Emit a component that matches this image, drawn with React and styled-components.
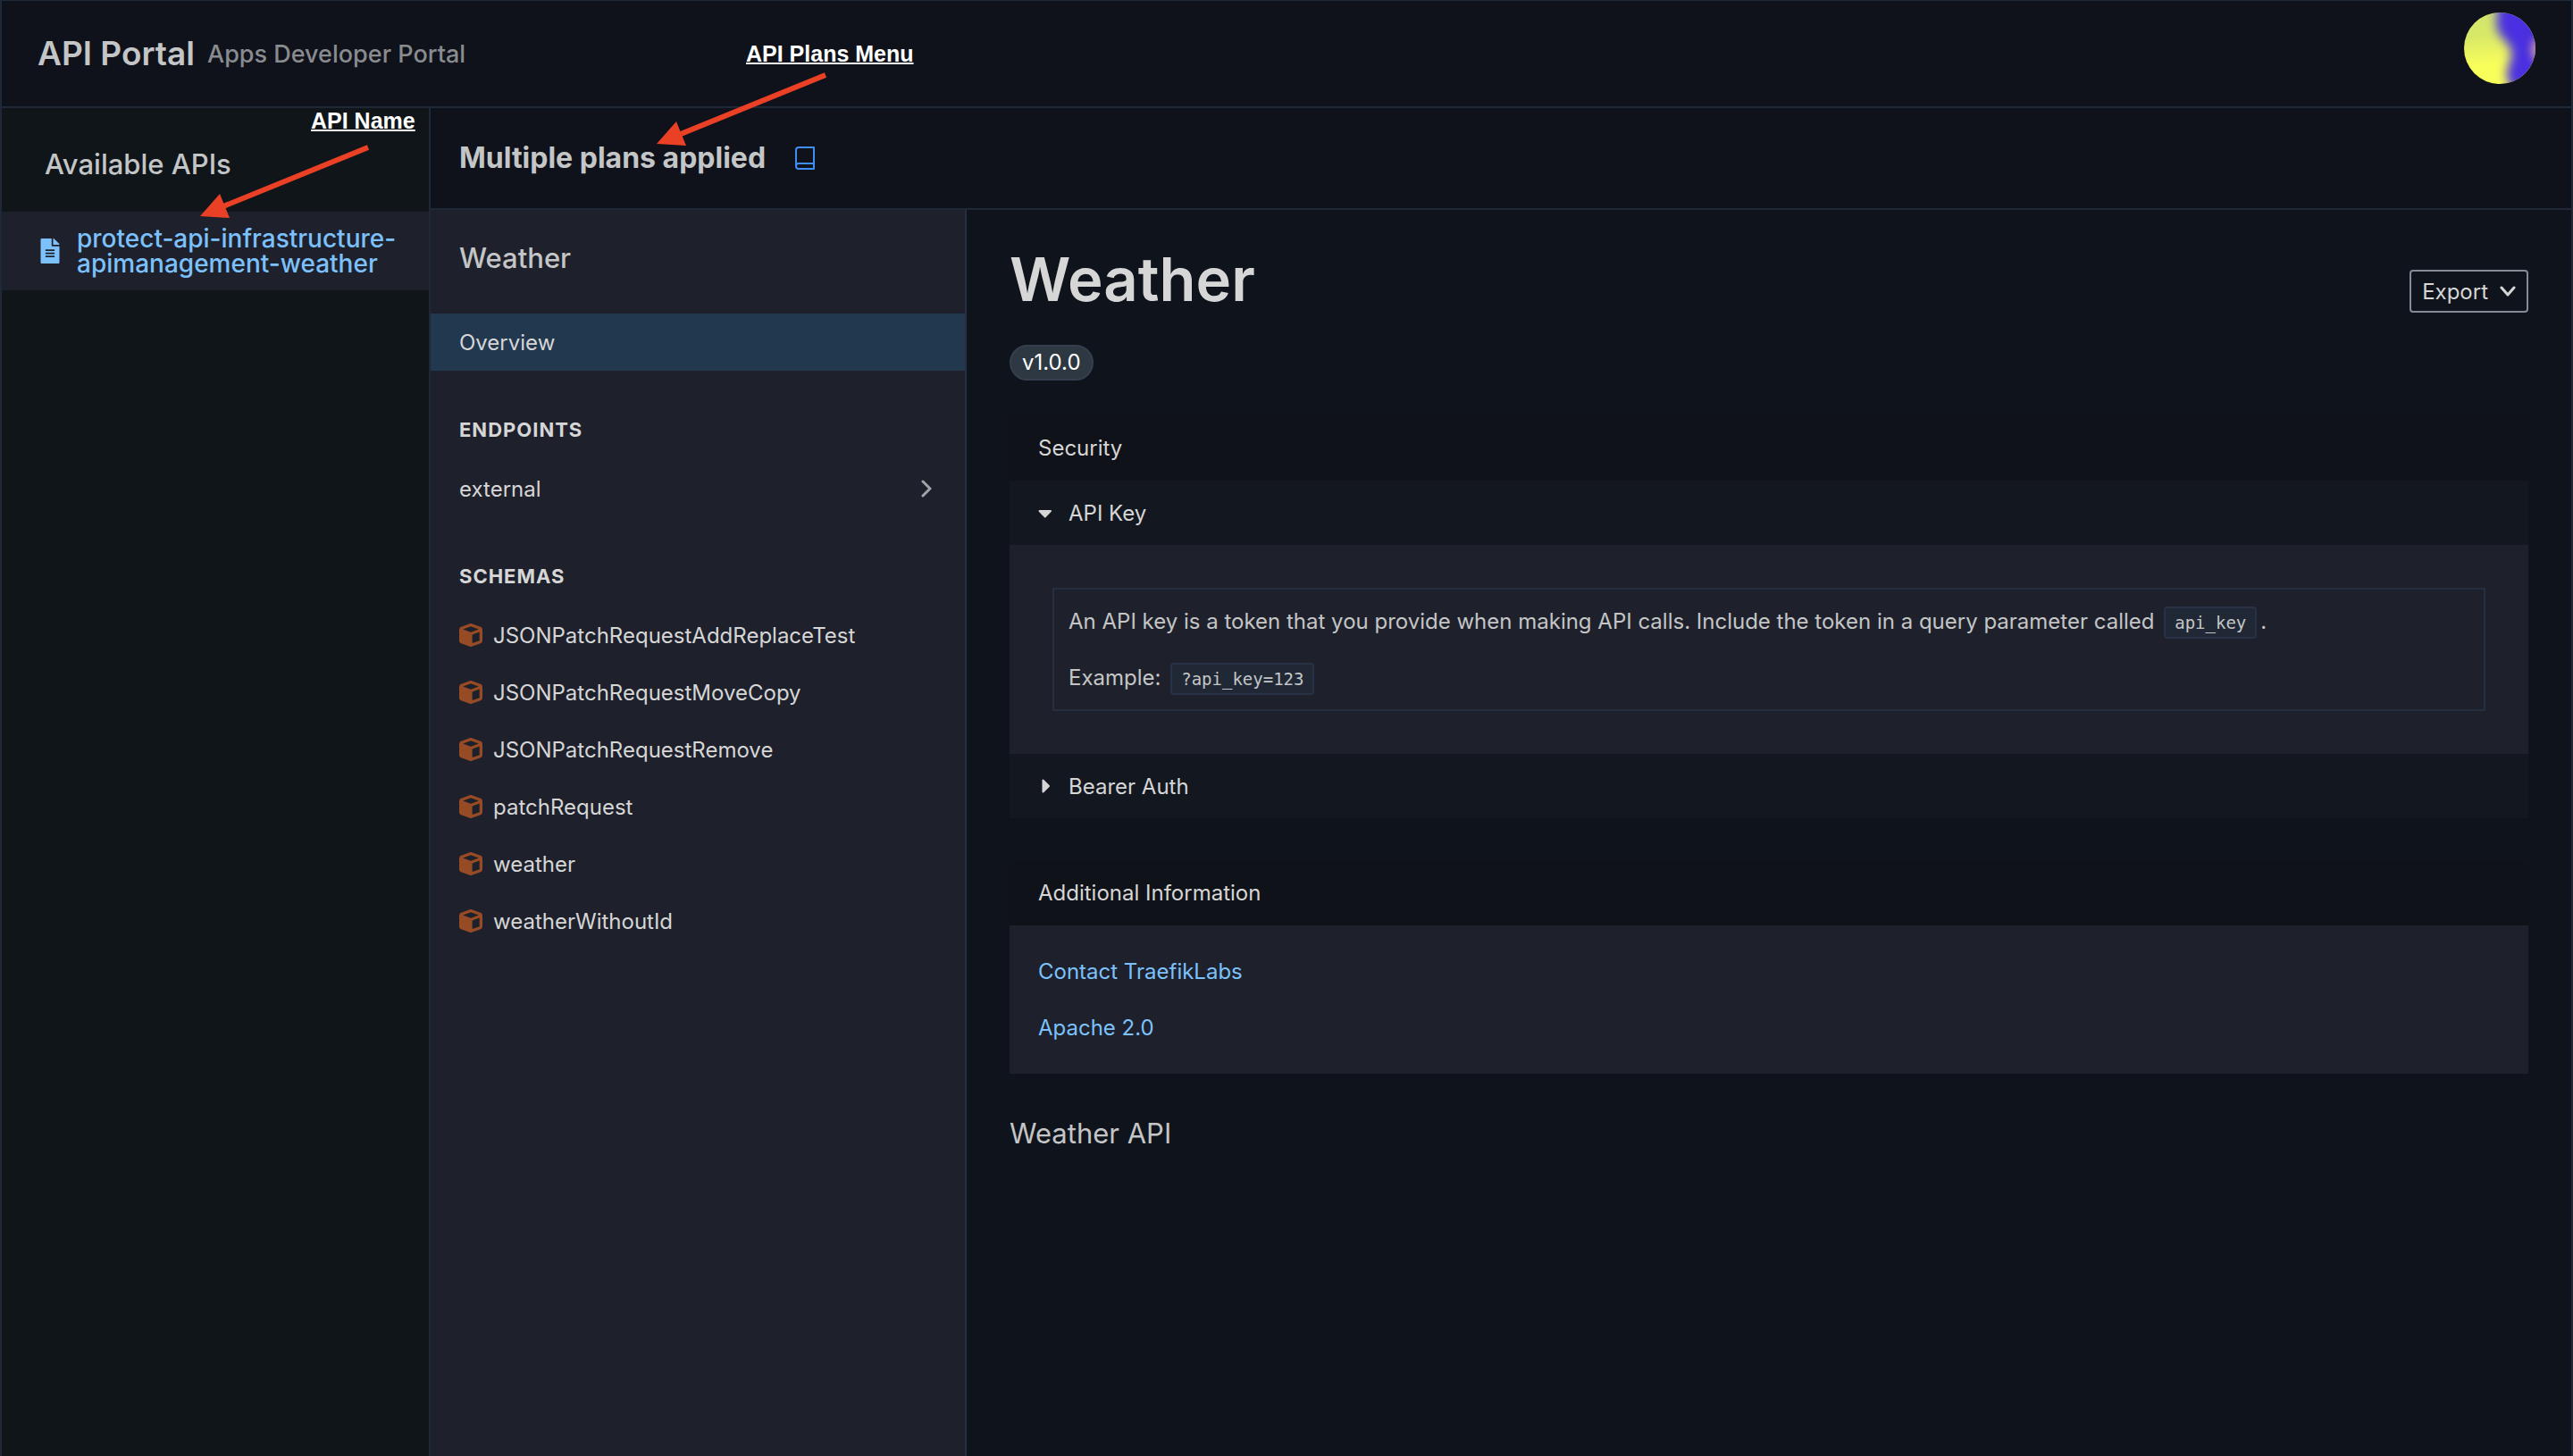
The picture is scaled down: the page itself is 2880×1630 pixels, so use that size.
import React, { useState } from 'react';
import styled, { createGlobalStyle } from 'styled-components';

const color = {
  page: '#0f131b',
  bar: '#0f121a',
  rail: '#0f1518',
  panel: '#1e212b',
  line: '#1f2836',
  boxLine: '#262f3f',
  active: '#22384f',
  row: '#131820',
  rowHead: '#0f1218',
  text: '#d6d6d7',
  soft: '#c4c5c6',
  muted: '#898b8f',
  link: '#7cc1fb',
  mark: '#ea4025',
};

const GlobalStyle = createGlobalStyle`
  *, *::before, *::after { box-sizing: border-box; }
  body {
    margin: 0;
    background: ${color.page};
    color: ${color.text};
    font-family: Inter, "Liberation Sans", sans-serif;
    font-size: 24px;
    line-height: 39px;
  }
  h1, h2, h3, p, ul { margin: 0; padding: 0; font-weight: 400; }
  ul { list-style: none; }
  a { color: inherit; text-decoration: none; }
  button { font: inherit; color: inherit; background: none; border: 0; padding: 0; cursor: pointer; }
  svg { display: block; flex: none; }
`;

const Shell = styled.div`
  position: relative;
  display: flex;
  flex-direction: column;
  min-height: 100vh;
  border: 2px solid ${color.line};
  border-width: 1px 2px 0;
`;

const Header = styled.header`
  display: flex;
  align-items: center;
  justify-content: space-between;
  height: 120px;
  padding: 0 40px;
  background: ${color.bar};
  border-bottom: 2px solid ${color.line};
`;

const Brand = styled.div`
  display: flex;
  align-items: center;
  gap: 14px;
`;

const Title = styled.h2`
  font-size: ${(p) => p.$size || 31}px;
  font-weight: ${(p) => p.$weight || 500};
  line-height: 38px;
  color: ${color.soft};
`;

const Tagline = styled.p`
  font-size: 27px;
  font-weight: 500;
  color: ${color.muted};
`;

const AvatarButton = styled.button`
  width: 80px;
  height: 80px;
  margin-bottom: 12px;
`;

const Body = styled.div`
  flex: 1;
  display: flex;
`;

const Rail = styled.aside`
  flex: none;
  width: 480px;
  background: ${color.rail};
  border-right: 2px solid ${color.line};
`;

const RailHeading = styled.div`
  padding: 44px 48px 34px;
`;

const ApiLink = styled.a`
  display: flex;
  align-items: center;
  gap: 19px;
  padding: 16px 32px 16px 43px;
  background: ${color.panel};
`;

const ApiName = styled.span`
  font-size: 28px;
  font-weight: 500;
  line-height: 28px;
  color: ${color.link};
`;

const Content = styled.div`
  flex: 1;
  min-width: 0;
  display: flex;
  flex-direction: column;
`;

const PlanBar = styled.div`
  display: flex;
  align-items: center;
  gap: 33px;
  height: 114px;
  padding: 0 32px;
  background: ${color.bar};
  border-bottom: 2px solid ${color.line};
`;

const Docs = styled.div`
  flex: 1;
  display: flex;
`;

const Toc = styled.nav`
  flex: none;
  width: 600px;
  background: ${color.panel};
  border-right: 2px solid ${color.boxLine};
`;

const TocHeading = styled.div`
  padding: 35px 32px 43px;
`;

const TocGroup = styled.h3`
  margin-top: 32px;
  padding: 0 32px;
  font-size: 22px;
  font-weight: 700;
  line-height: 68px;
  letter-spacing: 1px;
`;

const TocItem = styled.a`
  display: flex;
  align-items: center;
  gap: 12px;
  height: 64px;
  padding: 0 37px 0 32px;
  background: ${(p) => (p.$active ? color.active : 'transparent')};
`;

const TocLabel = styled.span`
  flex: 1;
`;

const Article = styled.main`
  flex: 1;
  min-width: 0;
  padding: 40px 48px;
`;

const ArticleTop = styled.div`
  display: flex;
  align-items: flex-end;
  justify-content: space-between;
`;

const ArticleTitle = styled.h1`
  font-size: 67px;
  font-weight: 600;
  line-height: 75px;
`;

const ExportButton = styled.button`
  display: flex;
  align-items: center;
  gap: 13px;
  height: 48px;
  padding: 0 12px;
  border: 2px solid #868a95;
  border-radius: 4px;
`;

const Badge = styled.span`
  display: block;
  width: fit-content;
  margin: 36px 0 40px;
  padding: 0 12px;
  line-height: 36px;
  color: #fff;
  background: #2d3842;
  border: 2px solid #353f50;
  border-radius: 20px;
`;

const Card = styled.section`
  margin-bottom: 48px;
`;

const CardHead = styled.h3`
  padding: 0 32px;
  font-size: 24px;
  line-height: 72px;
  background: ${color.rowHead};
`;

const Disclosure = styled.button`
  display: flex;
  align-items: center;
  gap: 18px;
  width: 100%;
  height: 72px;
  padding: 0 32px;
  background: ${color.row};
`;

const Panel = styled.div`
  padding: ${(p) => p.$pad};
  background: ${color.panel};
`;

const Note = styled.div`
  padding: 16px;
  border: 2px solid ${color.boxLine};
  color: ${color.soft};
`;

const Line = styled.p`
  & + & { margin-top: 24px; }
`;

const Code = styled.code`
  display: inline-block;
  margin: 0 4px;
  padding: 0 10px;
  font-family: "DejaVu Sans Mono", monospace;
  font-size: 19px;
  line-height: 32px;
  background: #202836;
  border: 2px solid #283145;
  border-radius: 4px;
`;

const TextLink = styled.a`
  color: ${color.link};
`;

const Summary = styled.p`
  font-size: 31px;
  line-height: 38px;
  color: ${color.soft};
`;

const Callout = styled.span`
  position: absolute;
  left: ${(p) => p.$x}px;
  top: ${(p) => p.$y}px;
  font-family: "Liberation Sans", Arial, sans-serif;
  font-size: 25px;
  font-weight: 700;
  line-height: 28px;
  color: #fff;
  white-space: nowrap;
  text-decoration: underline;
  text-decoration-thickness: 2px;
  text-underline-offset: 1px;
  text-decoration-skip-ink: none;
`;

const ArrowLayer = styled.svg`
  position: absolute;
  left: -2px;
  top: -1px;
  pointer-events: none;
`;

const Avatar = () => (
  <svg width="80" height="80" viewBox="0 0 80 80" aria-hidden="true">
    <defs>
      <clipPath id="avatar-clip"><circle cx="40" cy="40" r="40" /></clipPath>
      <linearGradient id="avatar-base" x1="0" y1="0" x2="0.1" y2="1">
        <stop offset="0" stopColor="#d3e56c" />
        <stop offset="0.35" stopColor="#d8e968" />
        <stop offset="0.75" stopColor="#f8fe5a" />
      </linearGradient>
      <filter id="avatar-soft" x="-50%" y="-50%" width="200%" height="200%" colorInterpolationFilters="sRGB">
        <feGaussianBlur stdDeviation="6" />
      </filter>
      <filter id="avatar-softer" x="-100%" y="-100%" width="300%" height="300%" colorInterpolationFilters="sRGB">
        <feGaussianBlur stdDeviation="5" />
      </filter>
    </defs>
    <g clipPath="url(#avatar-clip)">
      <rect width="80" height="80" fill="url(#avatar-base)" />
      <path
        d="M38 -14 L104 -14 L104 74 L66 96 C54 88 47 78 48 66 C49 58 54 52 53 44 C52 34 38 28 36 14 Z"
        fill="#4a30e0"
        filter="url(#avatar-soft)"
      />
      <ellipse cx="84" cy="42" rx="9" ry="14" fill="#c593a8" filter="url(#avatar-softer)" />
    </g>
  </svg>
);

const FileIcon = () => (
  <svg width="22" height="28" viewBox="0 0 384 512" fill={color.link} aria-hidden="true">
    <path d="M224 136V0H24C10.700 0 0 10.700 0 24v464c0 13.300 10.700 24 24 24h336c13.300 0 24-10.700 24-24V160H248c-13.200 0-24-10.800-24-24zm64 236c0 6.600-5.400 12-12 12H108c-6.600 0-12-5.400-12-12v-8c0-6.600 5.400-12 12-12h168c6.600 0 12 5.400 12 12v8zm0-64c0 6.600-5.400 12-12 12H108c-6.600 0-12-5.400-12-12v-8c0-6.600 5.400-12 12-12h168c6.600 0 12 5.400 12 12v8zm0-72v8c0 6.600-5.400 12-12 12H108c-6.600 0-12-5.400-12-12v-8c0-6.600 5.400-12 12-12h168c6.600 0 12 5.400 12 12zm96-114.100v6.100H256V0h6.100c6.400 0 12.500 2.500 17 7l97.900 98c4.500 4.500 7 10.600 7 16.900z" />
  </svg>
);

const BookIcon = () => (
  <svg width="22" height="26" viewBox="0 0 22 26" fill="none" stroke="#3d8ff5" strokeWidth="2" strokeLinejoin="round" aria-hidden="true">
    <path d="M21 19V1H4a3 3 0 0 0-3 3v18a3 3 0 0 1 3-3h17v6H4a3 3 0 0 1-3-3" />
  </svg>
);

const CubeIcon = () => (
  <svg width="26" height="26" viewBox="0 0 512 512" fill="#974b25" aria-hidden="true">
    <path d="M234.500 5.700c13.900-5 29.100-5 43.100 0l192 68.600C495 83.400 512 107.500 512 134.600V377.400c0 27-17 51.200-42.500 60.300l-192 68.600c-13.900 5-29.100 5-43.100 0l-192-68.600C17 428.600 0 404.500 0 377.400V134.600c0-27 17-51.200 42.500-60.300l192-68.600zM256 66L82.300 128 256 190l173.700-62L256 66zm32 368.600l160-57.100v-188L288 246.600v188z" />
  </svg>
);

const ChevronRight = () => (
  <svg width="12" height="20" viewBox="0 0 12 20" fill="none" stroke="#a2a4a8" strokeWidth="3" strokeLinecap="round" strokeLinejoin="round" aria-hidden="true">
    <path d="M2 2l8 8-8 8" />
  </svg>
);

const ChevronDown = () => (
  <svg width="18" height="12" viewBox="0 0 18 12" fill="none" stroke={color.text} strokeWidth="3" strokeLinecap="round" strokeLinejoin="round" aria-hidden="true">
    <path d="M2 2l7 8 7-8" />
  </svg>
);

const Caret = ({ open }) => (
  <svg width="16" height="16" viewBox="0 0 16 16" fill={color.text} stroke={color.text} strokeWidth="2" strokeLinejoin="round" aria-hidden="true">
    <path d={open ? 'M1.500 6h12.500L7.750 12.500Z' : 'M5.500 1.500v13L12 8Z'} />
  </svg>
);

const schemas = [
  'JSONPatchRequestAddReplaceTest',
  'JSONPatchRequestMoveCopy',
  'JSONPatchRequestRemove',
  'patchRequest',
  'weather',
  'weatherWithoutId',
];

export default function App() {
  const [keyOpen, setKeyOpen] = useState(true);
  return (
    <Shell>
      <GlobalStyle />
      <Header>
        <Brand>
          <Title $size={37} $weight={600}>API Portal</Title>
          <Tagline>Apps Developer Portal</Tagline>
        </Brand>
        <AvatarButton type="button" aria-label="Account">
          <Avatar />
        </AvatarButton>
      </Header>
      <Body>
        <Rail>
          <RailHeading>
            <Title>Available APIs</Title>
          </RailHeading>
          <ApiLink href="#api">
            <FileIcon />
            <ApiName>protect-api-infrastructure-apimanagement-weather</ApiName>
          </ApiLink>
        </Rail>
        <Content>
          <PlanBar>
            <Title $size={32} $weight={700}>Multiple plans applied</Title>
            <button type="button" aria-label="Plans">
              <BookIcon />
            </button>
          </PlanBar>
          <Docs>
            <Toc>
              <TocHeading>
                <Title>Weather</Title>
              </TocHeading>
              <TocItem href="#overview" $active>
                Overview
              </TocItem>
              <TocGroup>ENDPOINTS</TocGroup>
              <TocItem href="#external">
                <TocLabel>external</TocLabel>
                <ChevronRight />
              </TocItem>
              <TocGroup>SCHEMAS</TocGroup>
              <ul>
                {schemas.map((name) => (
                  <li key={name}>
                    <TocItem href={`#${name}`}>
                      <CubeIcon />
                      {name}
                    </TocItem>
                  </li>
                ))}
              </ul>
            </Toc>
            <Article>
              <ArticleTop>
                <ArticleTitle>Weather</ArticleTitle>
                <ExportButton type="button">
                  Export
                  <ChevronDown />
                </ExportButton>
              </ArticleTop>
              <Badge>v1.0.0</Badge>
              <Card>
                <CardHead>Security</CardHead>
                <Disclosure type="button" aria-expanded={keyOpen} onClick={() => setKeyOpen(!keyOpen)}>
                  <Caret open={keyOpen} />
                  API Key
                </Disclosure>
                {keyOpen && (
                  <Panel $pad="48px">
                    <Note>
                      <Line>
                        An API key is a token that you provide when making API calls. Include the token in a query
                        parameter called <Code>api_key</Code>.
                      </Line>
                      <Line>
                        Example: <Code>?api_key=123</Code>
                      </Line>
                    </Note>
                  </Panel>
                )}
                <Disclosure type="button" aria-expanded="false">
                  <Caret />
                  Bearer Auth
                </Disclosure>
              </Card>
              <Card>
                <CardHead>Additional Information</CardHead>
                <Panel $pad="32px">
                  <Line><TextLink href="#contact">Contact TraefikLabs</TextLink></Line>
                  <Line><TextLink href="#license">Apache 2.0</TextLink></Line>
                </Panel>
              </Card>
              <Summary>Weather API</Summary>
            </Article>
          </Docs>
        </Content>
      </Body>
      <Callout $x={346} $y={120}>API Name</Callout>
      <Callout $x={833} $y={45}>API Plans Menu</Callout>
      <ArrowLayer width="960" height="260" viewBox="0 0 960 260" fill={color.mark} stroke={color.mark} aria-hidden="true">
        <path d="M412 165L250 231" strokeWidth="6" />
        <path d="M224 242L246 217L257 244Z" stroke="none" />
        <path d="M924 84L762 150" strokeWidth="6" />
        <path d="M735 161L757 136L768 163Z" stroke="none" />
      </ArrowLayer>
    </Shell>
  );
}
